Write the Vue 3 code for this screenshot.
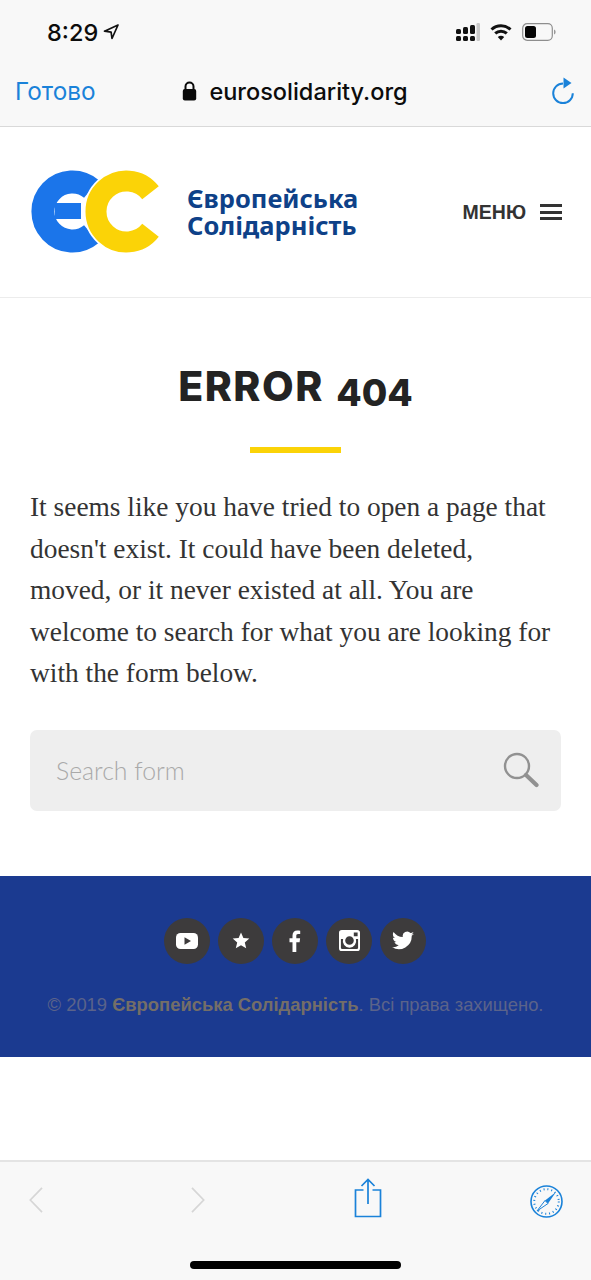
<script setup>
const lines = [
  'It seems like you have tried to open a page that',
  "doesn't exist. It could have been deleted,",
  'moved, or it never existed at all. You are',
  'welcome to search for what you are looking for',
  'with the form below.'
]
</script>

<template>
  <div class="page">
    <header class="chrome">
      <div class="status">
        <div class="time-wrap">
          <span class="time">8:29</span>
          <svg class="loc" width="16" height="16" viewBox="0 0 16 16"><path d="M15 1 1.500 7.200l6.600 1 .9 6.300z" fill="none" stroke="#111" stroke-width="1.700" stroke-linejoin="round"/></svg>
        </div>
        <div class="status-icons">
          <svg width="24" height="19" viewBox="0 0 24 19">
            <g fill="#111">
              <rect x="0" y="6" width="5" height="5" rx="1.500"/><rect x="0" y="13" width="5" height="5" rx="1.500"/>
              <rect x="7" y="4" width="5" height="7" rx="1.500"/><rect x="7" y="13" width="5" height="5" rx="1.500"/>
              <rect x="14" y="2" width="5" height="9" rx="1.500"/><rect x="14" y="13" width="5" height="5" rx="1.500"/>
            </g>
            <rect x="20.500" y="0" width="3.500" height="18" rx="1.200" fill="#c9c9c9"/>
          </svg>
          <svg width="22" height="18" viewBox="0 0 22 18">
            <g fill="none" stroke="#111" stroke-width="3">
              <path d="M1.500 6.500c5.400-5 13.600-5 19 0"/>
              <path d="M5.200 10.400c3.300-3 8.300-3 11.600 0"/>
            </g>
            <path d="M11 17.500 7.800 14c1.800-1.600 4.600-1.600 6.400 0z" fill="#111"/>
          </svg>
          <svg width="34" height="18" viewBox="0 0 34 18">
            <rect x=".7" y=".7" width="29.600" height="16.600" rx="4.500" fill="none" stroke="#8e8e8e" stroke-width="1.200"/>
            <rect x="3" y="3" width="11" height="12" rx="2.500" fill="#050505"/>
            <path d="M32 6.500c1.200.4 1.600 1.300 1.600 2.500s-.4 2.100-1.600 2.500z" fill="#9a9a9a"/>
          </svg>
        </div>
      </div>
      <div class="nav">
        <span class="done">Готово</span>
        <div class="url">
          <svg width="15" height="20" viewBox="0 0 15 20"><path d="M3.500 9V5.500a4 4 0 0 1 8 0V9" fill="none" stroke="#0a0a0a" stroke-width="2"/><rect x="0.800" y="8" width="13.400" height="11.500" rx="2" fill="#0a0a0a"/></svg>
          <span>eurosolidarity.org</span>
        </div>
        <svg class="reload" width="24" height="28" viewBox="0 0 24 28">
          <path d="M12 6.500a9.800 9.800 0 1 0 9.800 9.800" fill="none" stroke="#1a82d9" stroke-width="2"/>
          <path d="M12.500 0.500 20.500 6 12.500 11.500z" fill="#1a82d9"/>
        </svg>
      </div>
    </header>

    <div class="site-head">
      <div class="brand">
        <svg class="logo" width="130" height="84" viewBox="30 170 130 84">
          <path d="M91.500 189A29.500 29.500 0 1 0 91.500 234" fill="none" stroke="#1b75ea" stroke-width="23"/>
          <rect x="55" y="203" width="26" height="16" fill="#1b75ea"/>
          <path d="M150.500 192.700A30.500 30.500 0 1 0 150.500 230.300" fill="none" stroke="#fff" stroke-width="24.500"/>
          <path d="M150.500 192.700A30.500 30.500 0 1 0 150.500 230.300" fill="none" stroke="#fbd307" stroke-width="21"/>
        </svg>
        <div class="brand-name"><span>Європейська</span><span>Солідарність</span></div>
      </div>
      <div class="menu">
        <span>МЕНЮ</span>
        <div class="burger"><i></i><i></i><i></i></div>
      </div>
    </div>

    <main class="main">
      <h1 class="title">ERROR <span class="num">404</span></h1>
      <div class="rule"></div>
      <p class="copy"><span v-for="l in lines" :key="l" class="line">{{ l }}</span></p>
      <div class="search">
        <span class="ph">Search form</span>
        <svg width="36" height="36" viewBox="0 0 36 36">
          <circle cx="14" cy="14" r="12" fill="none" stroke="#919191" stroke-width="2.400"/>
          <path d="M23 23 33.500 33" stroke="#919191" stroke-width="4.200" stroke-linecap="round"/>
        </svg>
      </div>
    </main>

    <footer class="foot">
      <div class="socials">
        <span class="soc">
          <svg width="22" height="16" viewBox="0 0 22 16"><rect width="22" height="16" rx="4.500" fill="#fff"/><path d="M8.500 4.200 15 8l-6.500 3.800z" fill="#3d3b3c"/></svg>
        </span>
        <span class="soc">
          <svg width="18" height="17" viewBox="0 0 18 17"><path d="M9 .5l2.400 5.500 5.900.5-4.500 3.900 1.400 5.900L9 13.200l-5.200 3.100 1.400-5.900L.7 6.500 6.600 6z" fill="#fff"/></svg>
        </span>
        <span class="soc">
          <svg width="12" height="22" viewBox="0 0 12 22"><path d="M3.500 22V12.200H.5V8.300h3V5.600C3.500 2.300 5.400.5 8.300.5c1.400 0 2.500.1 2.900.2v3.400H9.200c-1.600 0-1.900.8-1.900 1.900v2.300h3.800l-.5 3.900H7.300V22z" fill="#fff"/></svg>
        </span>
        <span class="soc">
          <svg width="21" height="21" viewBox="0 0 22 22">
            <path fill="#fff" fill-rule="evenodd" d="M3 0h16a3 3 0 0 1 3 3v16a3 3 0 0 1-3 3H3a3 3 0 0 1-3-3V3a3 3 0 0 1 3-3zM2 9.500V18.500a1.500 1.500 0 0 0 1.500 1.500h15a1.500 1.500 0 0 0 1.500-1.500V9.500h-2.300a7 7 0 1 1-13.400 0zM15.500 2.500v4h4v-4zM11 6.500a4.500 4.500 0 1 0 0 9 4.500 4.500 0 0 0 0-9z"/>
          </svg>
        </span>
        <span class="soc">
          <svg width="22" height="19" viewBox="0 0 22 19"><path d="M22 2.700c-.8.4-1.700.6-2.600.7.900-.6 1.700-1.500 2-2.500-.9.500-1.900.9-2.900 1.100A4.500 4.500 0 0 0 10.800 6C7.100 5.800 3.800 4 1.500.900.300 3 .900 5.700 2.900 7c-.7 0-1.400-.2-2-.6 0 2.200 1.500 4.100 3.600 4.600-.7.200-1.400.2-2 .1.600 1.800 2.200 3.100 4.200 3.100A9 9 0 0 1 0 16.100 12.800 12.800 0 0 0 19.700 4.700c.9-.5 1.700-1.200 2.300-2z" fill="#fff"/></svg>
        </span>
      </div>
      <p class="legal">© 2019 <b>Європейська Солідарність</b>. Всі права захищено.</p>
    </footer>

    <div class="spacer"></div>

    <nav class="tools">
      <div class="tool-row">
        <svg class="chev" width="14" height="26" viewBox="0 0 14 26"><path d="M13 .8 1.300 13 13 25.200" fill="none" stroke="#d6d6d6" stroke-width="1.700"/></svg>
        <svg class="chev" width="14" height="26" viewBox="0 0 14 26"><path d="M1 .8 12.700 13 1 25.200" fill="none" stroke="#d6d6d6" stroke-width="1.700"/></svg>
        <svg width="28" height="40" viewBox="0 0 28 40">
          <g fill="none" stroke="#1a82d9" stroke-width="1.700">
            <path d="M9.500 12H1.500v26.500h25V12h-8"/>
            <path d="M14 26V1.500M7.500 8 14 1.500 20.500 8"/>
          </g>
        </svg>
        <svg class="compass" width="33" height="33" viewBox="0 0 33 33">
          <circle cx="16.500" cy="16.500" r="15.500" fill="none" stroke="#1a82d9" stroke-width="1.600"/>
          <circle cx="16.500" cy="16.500" r="12.300" fill="none" stroke="#1a82d9" stroke-width="2" stroke-dasharray="1 2.900"/>
          <path d="M26 7 18 18.500 15 15.500z" fill="#1a82d9"/>
          <path d="M7 26 15 15.500 18 18.500z" fill="none" stroke="#1a82d9" stroke-width="1"/>
        </svg>
      </div>
      <div class="home"></div>
    </nav>
  </div>
</template>

<style scoped>
.page {
  width: 591px;
  height: 1280px;
  display: flex;
  flex-direction: column;
  background: #fff;
  overflow: hidden;
  font-family: "Liberation Sans", sans-serif;
}
.chrome {
  height: 127px;
  box-sizing: border-box;
  background: #f8f8f8;
  border-bottom: 1px solid #d9d9d9;
  flex: none;
}
.status {
  height: 64px;
  box-sizing: border-box;
  padding: 0 35px 0 47px;
  display: flex;
  justify-content: space-between;
  align-items: center;
}
.time-wrap { display: flex; align-items: center; gap: 5px; }
.time {
  font-family: Inter, sans-serif;
  font-size: 23.500px;
  font-weight: 500;
  color: #0c0c0c;
}
.status-icons { display: flex; align-items: center; gap: 10px; }
.nav {
  height: 62px;
  box-sizing: border-box;
  padding: 0 16px 8px 15px;
  display: grid;
  grid-template-columns: 1fr auto 1fr;
  align-items: center;
}
.done {
  font-family: Inter, sans-serif;
  font-size: 24.300px;
  color: #1a82d9;
}
.reload { justify-self: end; }
.url {
  display: flex;
  align-items: center;
  gap: 12px;
  font-family: Inter, sans-serif;
  font-size: 23.500px;
  font-weight: 500;
  color: #0c0c0c;
}
.site-head {
  height: 171px;
  box-sizing: border-box;
  border-bottom: 1px solid #ececec;
  padding: 0 29px 0 30px;
  display: flex;
  align-items: center;
  justify-content: space-between;
  flex: none;
}
.brand { display: flex; align-items: center; gap: 27px; }
.logo { display: block; }
.brand-name {
  font-family: "Noto Sans", sans-serif;
  font-size: 25.500px;
  font-weight: 700;
  line-height: 27px;
  color: #0e4188;
}
.brand-name span { display: block; height: 27px; overflow: visible; }
.menu {
  display: flex;
  align-items: center;
  gap: 14px;
  font-size: 19.500px;
  font-weight: 700;
  color: #333;
}
.burger { display: flex; flex-direction: column; gap: 3.500px; }
.burger i { display: block; width: 22px; height: 3px; background: #333; }
.main {
  padding: 61px 30px 65px;
  flex: none;
}
.title {
  margin: 0;
  height: 55px;
  text-align: center;
  font-family: Inter, sans-serif;
  font-size: 41px;
  font-weight: 800;
  line-height: 54px;
  letter-spacing: 1.500px;
  color: #232323;
}
.num {
  font-size: 37px;
  line-height: 1;
  position: relative;
  top: 5px;
  margin-left: 2px;
  letter-spacing: 0;
}
.rule {
  width: 91px;
  height: 6px;
  background: #fbd307;
  margin: 33px auto 0;
}
.copy {
  margin: 34px 0 0;
  font-family: "Liberation Serif", serif;
  font-size: 27.400px;
  line-height: 41.500px;
  color: #333;
}
.line { display: block; white-space: nowrap; }
.search {
  margin-top: 35px;
  height: 81px;
  box-sizing: border-box;
  border-radius: 7px;
  background: #eeeeee;
  padding: 0 22px 0 26px;
  display: flex;
  align-items: center;
  justify-content: space-between;
}
.ph {
  font-family: Lato, sans-serif;
  font-weight: 300;
  font-size: 24.800px;
  color: #a9a9a9;
}
.foot {
  height: 181px;
  box-sizing: border-box;
  background: #1b3a90;
  padding-top: 42px;
  flex: none;
}
.socials { display: flex; justify-content: center; gap: 8px; padding-right: 1px; }
.soc {
  width: 46px;
  height: 46px;
  border-radius: 50%;
  background: #3d3b3c;
  display: flex;
  align-items: center;
  justify-content: center;
}
.legal {
  margin: 29px 0 0;
  text-align: center;
  font-size: 18.400px;
  line-height: 24px;
  color: #5b638a;
  white-space: nowrap;
}
.legal b { color: #746e68; }
.spacer { flex: 1; }
.tools {
  height: 120px;
  box-sizing: border-box;
  background: #f8f8f8;
  border-top: 2px solid #e4e4e4;
  flex: none;
  display: flex;
  flex-direction: column;
}
.tool-row {
  height: 99px;
  box-sizing: border-box;
  padding: 0 28px 27px 29px;
  display: flex;
  align-items: center;
  justify-content: space-between;
}
.chev { margin-top: 4px; }
.compass { margin-top: 6px; }
.home {
  width: 211px;
  height: 8px;
  border-radius: 4px;
  background: #000;
  margin: 0 auto;
}
</style>
